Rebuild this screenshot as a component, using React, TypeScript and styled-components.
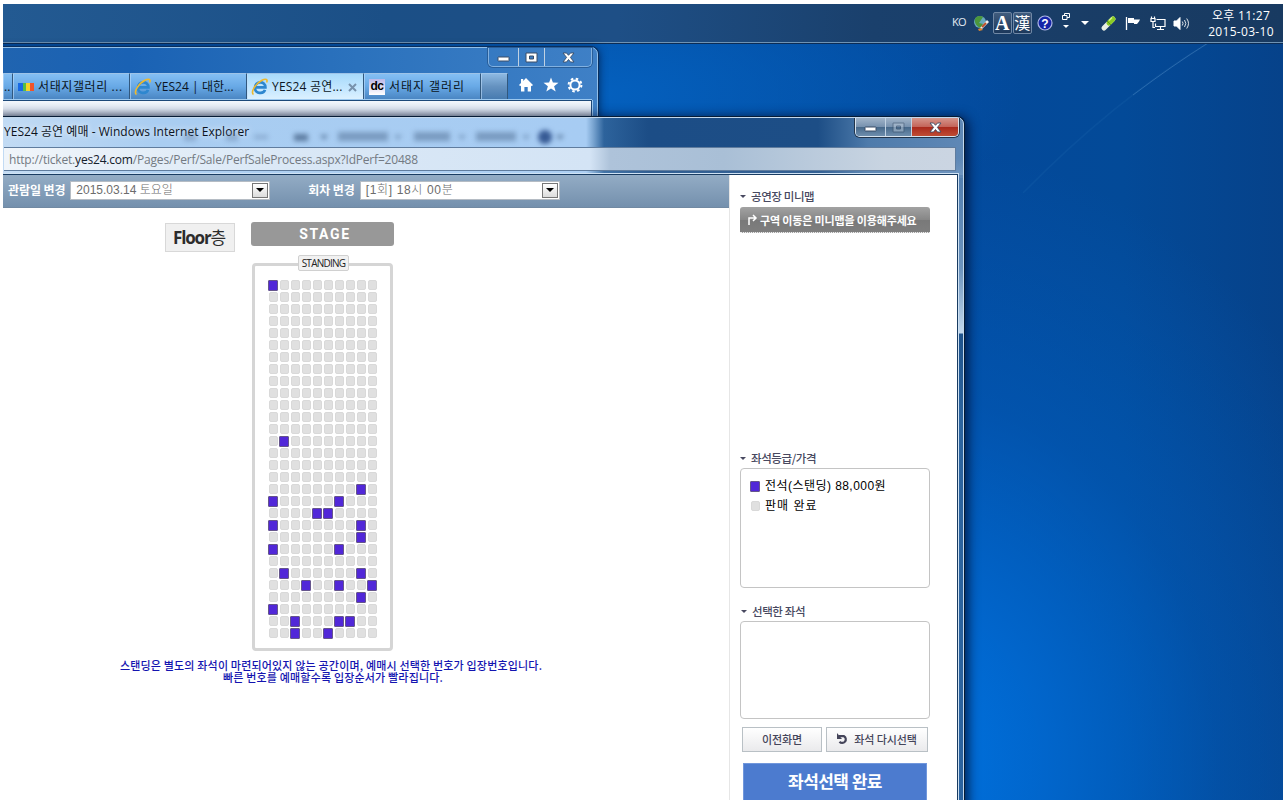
import * as React from "react";
import styled, { createGlobalStyle } from "styled-components";

const ui = `"Open Sans", "Noto Sans CJK KR", sans-serif`;
const kr = `"Noto Sans CJK KR", sans-serif`;
const gulim = `"Liberation Sans", "Noto Sans CJK KR", sans-serif`;

const GlobalStyle = createGlobalStyle`
    * {
        box-sizing: border-box;
    }

    body {
        margin: 0;
        background: #fff;
        overflow: hidden;
        font-family: ${ui};
        font-size: 12px;
    }
`;

const Screen = styled.div`
    height: 800px;
    padding: 4px 0 0 3px;
    overflow: hidden;
`;

const Desktop = styled.div`
    position: relative;
    height: 796px;
    overflow: hidden;
    background:
        radial-gradient(ellipse 520px 620px at 900px 760px, #0074e2 0, rgba(0, 108, 215, 0.85) 25%, rgba(0, 98, 200, 0.4) 60%, transparent 100%),
        radial-gradient(ellipse 420px 170px at 600px 90px, #0460be, transparent 100%),
        linear-gradient(90deg, #0450a4 0, #03499b 960px, #034a98 1120px, #06428a 1280px);
`;

const LightRay = styled.svg`
    position: absolute;
    right: 0;
    top: 39px;
`;

const Taskbar = styled.div`
    position: relative;
    display: flex;
    justify-content: flex-end;
    align-items: center;
    height: 39px;
    padding-right: 2px;
    color: #fff;
    background: linear-gradient(90deg, #235a92 0, #1b4f86 30%, #1e4f86 48%, #1a406c 68%, #183a61 100%);
    border-bottom: 1px solid #6f93b4;
    box-shadow: 0 1px 0 #0b2c55;
`;

const Tray = styled.div`
    display: flex;
    align-items: center;
    height: 38px;

    svg {
        display: block;
    }
`;

const TrayItem = styled.div<{ w: number }>`
    display: flex;
    justify-content: center;
    align-items: center;
    flex: none;
    width: ${(p) => p.w}px;
`;

const Lang = styled.span`
    font-size: 11px;
    letter-spacing: -0.6px;
    color: #e3ebf3;
    margin-top: -3px;
`;

const ImeKey = styled.div`
    width: 19px;
    height: 22px;
    border: 1px solid #7088a5;
    border-radius: 2px;
    background: linear-gradient(#405c7e, #1c385b);
    font: bold 20px/20px "Liberation Serif", serif;
    text-align: center;
    text-indent: -0.5px;

    &.hanja {
        font: 16px/19px "Noto Sans CJK KR", sans-serif;
        margin-left: 1px;
    }
`;

const Clock = styled.div`
    width: 80px;
    margin-left: 9px;
    padding-top: 2px;
    text-align: center;
    font-size: 12px;
    line-height: 16px;
    letter-spacing: 0.3px;
`;

const BackWindow = styled.div`
    position: absolute;
    left: -6px;
    top: 43px;
    width: 601px;
    height: 760px;
    padding-left: 5px;
    border: 1px solid #92bfe8;
    border-radius: 0 7px 0 0;
    background: linear-gradient(90deg, #2064b0 0, #1a62b4 22%, #2b72bd 60%, #3f80c6 100%);
    box-shadow: 0 0 0 1px #0a2f5e, 1px 1px 8px rgba(0, 15, 50, 0.7);
`;

const Controls = styled.div<{ $red?: boolean }>`
    display: flex;
    width: 104px;
    height: 19px;
    overflow: hidden;
    border: 1px solid ${(p) => (p.$red ? "#d7e3ee" : "#82b1e0")};
    border-top: 0;
    border-radius: 0 0 5px 5px;
    box-shadow: 0 0 0 1px ${(p) => (p.$red ? "#22344a" : "#285d98")};
`;

const Control = styled.div<{ w: number; $tone?: "glass" | "red" }>`
    width: ${(p) => p.w}px;
    display: flex;
    justify-content: center;
    align-items: center;
    background: ${(p) =>
        p.$tone === "red"
            ? "linear-gradient(#d5968c 0, #c4655a 48%, #a9281c 50%, #bf4c33 100%)"
            : p.$tone === "glass"
            ? "linear-gradient(#a0b4c9 0, #7892af 48%, #456789 50%, #6e8ead 100%)"
            : "transparent"};

    & + & {
        border-left: 1px solid ${(p) => (p.$tone ? "#c0d1e2" : "#82b1e0")};
    }
`;

const BackTitle = styled.div`
    display: flex;
    justify-content: flex-end;
    height: 25px;
    padding-right: 5px;
`;

const TabStrip = styled.div`
    display: flex;
    height: 27px;
`;

const Tab = styled.div<{ w: number; $active?: boolean }>`
    display: flex;
    align-items: center;
    flex: none;
    width: ${(p) => p.w}px;
    height: 26px;
    padding: 1px 0 0 4px;
    overflow: hidden;
    white-space: nowrap;
    color: #0b1523;
    border-top: 1px solid #9dc3e8;
    border-right: 1px solid #31587e;
    box-shadow: inset 1px 0 0 rgba(190, 220, 250, 0.6);
    background: ${(p) =>
        p.$active ? "linear-gradient(#a7dafb, #c4e7ff 60%, #dcf1ff)" : "linear-gradient(#84bff4, #68a9e6 50%, #4a86c3)"};

    &.new-tab {
        background: linear-gradient(#8db9e2, #6592c0 50%, #477bb0);
    }

    svg {
        flex: none;
    }
`;

const TabLabel = styled.span<{ $gap?: number; $track?: number }>`
    margin-left: ${(p) => p.$gap ?? 4}px;
    font-size: 12px;
    line-height: 20px;
    letter-spacing: ${(p) => p.$track ?? 0}px;
`;

const DcIcon = styled.span`
    width: 16px;
    height: 16px;
    margin-left: 1px;
    background: linear-gradient(#bcb8e8, #fff);
    font: bold 12px/15px "Liberation Sans", sans-serif;
    text-align: center;
    letter-spacing: -0.5px;
    color: #000;
`;

const TabTools = styled.div`
    display: flex;
    align-items: center;
    gap: 8.5px;
    padding: 0 0 4px 10px;
`;

const BackToolbar = styled.div`
    height: 100px;
    margin-right: 5px;
    border: 1px solid #1d4878;
    border-left: 0;
    box-shadow: 0 -1px 0 #9bc8ef, 1px 0 0 #9bc8ef;
    background: linear-gradient(#f3f7fc, #dfe7f2 8px, #aeb9c8 16px);
`;

const FrontWindow = styled.div`
    position: absolute;
    left: -6px;
    top: 113px;
    width: 967px;
    height: 760px;
    padding-left: 6px;
    border: 1px solid #c3d8ec;
    border-radius: 0 7px 0 0;
    background:
        linear-gradient(180deg, transparent 0 60px, rgba(80, 125, 175, 0.7) 60px, #6c93bd 150px, #c3d8ec 215px, #1f538c 216px, #2c649f 300px, #2a629f 100%) right / 5px 100% no-repeat,
        linear-gradient(#0000 40px, rgba(215, 230, 245, 0.15)) 0 0 / 100% 57px no-repeat,
        linear-gradient(90deg, #c2dbf4 0, #a9cdf1 160px, #a7ccf3 588px, #7ba6d2 595px, #2d639c 606px, #1c4d86 650px, #1d4e86 820px, #4e7bab 870px, #5f88b6 967px);
    box-shadow: 0 0 0 1px #061c36, 2px 2px 12px 2px rgba(0, 10, 40, 0.8);
`;

const Caption = styled.div`
    position: relative;
    display: flex;
    justify-content: space-between;
    height: 29px;
    padding-right: 4px;
    overflow: hidden;
`;

const CaptionText = styled.div`
    font-size: 12px;
    line-height: 27px;
    letter-spacing: 0.04px;
    color: #0c131d;
    text-shadow: 0 0 6px #fff;
`;

// menu of the window behind, seen through the glass
const Ghost = styled.svg`
    position: absolute;
    left: 170px;
    top: 5px;
    filter: blur(2.5px);
`;

const AddressBar = styled.div`
    height: 24px;
    margin-right: 7px;
    padding-left: 5px;
    border: 1px solid #5f7c9e;
    border-left: 0;
    background: linear-gradient(90deg, #f0f5fa 0, #dae8f6 280px, #d4e4f5 586px, #aec3da 606px, #a9bfd6 720px, #c8d4e1 880px, #cbd5e2 100%);
    font-size: 12px;
    line-height: 24px;
    letter-spacing: -0.19px;
    color: #737a82;

    b {
        font-weight: 400;
        color: #14202c;
    }
`;

const Page = styled.div`
    display: flex;
    width: 955px;
    height: 700px;
    margin-top: 3px;
    margin-left: -1px;
    border-top: 1px solid #193c62;
    border-right: 1px solid #193c62;
    box-shadow: 1px -1px 0 #cfe2f4;
    background: #fff;
`;

const Main = styled.div`
    width: 727px;
    border-right: 1px solid #e6e6e6;
`;

const Filters = styled.div`
    display: flex;
    align-items: center;
    height: 33px;
    padding: 0 0 2px 5px;
    background: linear-gradient(#93acc5, #7490ad);
    border-bottom: 1px solid #7189a2;
`;

const FilterLabel = styled.span<{ $ml?: number }>`
    flex: none;
    margin-left: ${(p) => p.$ml ?? 0}px;
    font: bold 12px/18px ${kr};
    letter-spacing: -0.1px;
    color: #fff;
`;

const Select = styled.div<{ $ml: number; $track?: number }>`
    display: flex;
    justify-content: space-between;
    width: 200px;
    height: 19px;
    margin-left: ${(p) => p.$ml}px;
    padding: 1px 1px 1px 5px;
    border: 1px solid #b5bcc4;
    background: #fff;
    font: 300 12px/15px ${gulim};
    letter-spacing: ${(p) => p.$track ?? 0}px;
    color: #6c6c6c;
    white-space: pre;
`;

const Drop = styled.div`
    display: flex;
    align-items: center;
    justify-content: center;
    width: 16px;
    height: 15px;
    border: 1px solid #777;
    background: linear-gradient(#fff, #dcdcdc);
`;

const Hall = styled.div`
    display: flex;
    align-items: flex-start;
    padding: 14px 0 0 162px;
`;

const Floor = styled.div`
    width: 70px;
    height: 29px;
    border: 1px solid #d8d8d8;
    background: #f0f0f0;
    margin-top: 1px;
    padding-left: 7px;
    font: 17px/27px ${ui};
    letter-spacing: -1px;
    color: #2c2c2c;
    white-space: nowrap;

    b {
        letter-spacing: -1.15px;
    }
`;

const Arena = styled.div`
    width: 143px;
    margin-left: 16px;
    display: flex;
    flex-direction: column;
    align-items: center;
`;

const Stage = styled.div`
    width: 143px;
    height: 24px;
    border-radius: 3px;
    background: #989898;
    font: bold 14px/25px Roboto, sans-serif;
    letter-spacing: 1.6px;
    padding-left: 5px;
    text-align: center;
    color: #fff;
`;

const StandingTag = styled.div`
    position: relative;
    z-index: 1;
    width: 51px;
    height: 16px;
    margin: 9px 0 -8px 2px;
    border: 1px solid #d0d0d0;
    border-radius: 2px;
    background: #f1f1f1;
    font: 10px/14px ${ui};
    letter-spacing: -0.75px;
    text-align: center;
    color: #222;
`;

const Block = styled.div`
    width: 141px;
    height: 388px;
    padding: 14px 0 0 13px;
    border: 3px solid #d5d5d5;
    border-radius: 4px;
`;

const SeatGrid = styled.div`
    display: grid;
    grid-template-columns: repeat(10, 11px);
    grid-auto-rows: 12px;
`;

const Seat = styled.div<{ $open: boolean }>`
    width: ${(p) => (p.$open ? 10 : 9)}px;
    height: ${(p) => (p.$open ? 11 : 10)}px;
    margin-left: ${(p) => (p.$open ? 0 : 1)}px;
    border: 1px solid ${(p) => (p.$open ? "#65558c" : "#d9d9d9")};
    border-radius: ${(p) => (p.$open ? 1 : 2)}px;
    background: ${(p) => (p.$open ? "#5127d8" : "#e0e0e0")};
`;

const Notice = styled.div`
    margin-top: 8px;
    width: 656px;
    font: 500 11px/12px ${kr};
    letter-spacing: 0.18px;
    text-align: center;
    color: #1414b0;
    white-space: nowrap;

    div + div {
        padding-left: 4px;
    }
`;

const Side = styled.div`
    padding: 12px 0 0 10px;
    width: 227px;
`;

const Heading = styled.h3<{ $mt?: number; $ml?: number }>`
    display: flex;
    align-items: center;
    gap: 5px;
    margin: ${(p) => p.$mt ?? 0}px 0 0 ${(p) => p.$ml ?? 0}px;
    height: 18px;
    font: 500 11.5px/18px ${kr};
    letter-spacing: -0.4px;
    color: #484960;
`;

const MapHint = styled.div`
    display: flex;
    align-items: center;
    width: 190px;
    height: 26px;
    margin-top: 2px;
    padding-left: 7px;
    gap: 2px;
    border-radius: 3px 3px 0 0;
    border-bottom: 1px dotted #eee;
    background: linear-gradient(#a2a2a2, #878787 50%, #797979 51%, #7e7e7e);
    font: bold 11px/24px ${kr};
    letter-spacing: -0.15px;
    color: #fff;
    white-space: nowrap;
`;

const Panel = styled.div<{ h: number }>`
    width: 190px;
    height: ${(p) => p.h}px;
    margin-top: 1px;
    padding: 7px 9px;
    border: 1px solid #c4c4c4;
    border-radius: 4px;
`;

const Legend = styled.div<{ $track: number }>`
    display: flex;
    align-items: center;
    gap: 5px;
    height: 20px;
    font: 12px/20px ${gulim};
    letter-spacing: ${(p) => p.$track}px;
    color: #000;
    white-space: pre;
`;

const Buttons = styled.div`
    display: flex;
    gap: 4px;
    margin: 8px 0 11px 2px;
`;

const Button = styled.button<{ w: number }>`
    display: flex;
    align-items: center;
    justify-content: center;
    gap: 5px;
    width: ${(p) => p.w}px;
    height: 25px;
    padding: 0 0 1px;
    border: 1px solid #b9c0c5;
    background: linear-gradient(#fff, #eaeaec);
    font: 500 11px/22px ${kr};
    letter-spacing: -0.1px;
    color: #45455a;
    white-space: nowrap;
`;

const Submit = styled.button`
    display: block;
    width: 184px;
    height: 40px;
    margin-left: 3px;
    padding: 0 0 4px;
    border: 1px solid #7197dc;
    background: #4c7bcf;
    font: bold 17px/34px ${kr};
    letter-spacing: -0.55px;
    color: #fff;
`;

const openSeats: Record<number, number[]> = {
    0: [0],
    13: [1],
    17: [8],
    18: [0, 6],
    19: [4, 5],
    20: [0, 8],
    21: [8],
    22: [0, 6],
    24: [1, 8],
    25: [3, 6, 9],
    26: [8],
    27: [0],
    28: [2, 6, 7],
    29: [2, 5],
};

const Arrow = ({ fill = "#000", w = 8 }) => (
    <svg width={w} height={w / 2} viewBox="0 0 8 4">
        <path d="M0 0h8L4 4z" fill={fill} />
    </svg>
);

const IeIcon = () => (
    <svg width="18" height="18" viewBox="0 0 18 18" fill="none">
        <path d="M4.2 9.4h10.2c0-7.2-10.4-6.6-10.4.5 0 6 8.4 6.600 10 2" stroke="#2e87cf" strokeWidth="2.700" />
        <path d="M2.500 16.500C-1 14.500 5 5 11 2.200c4-1.900 6-.6 4.600 2.300" stroke="#eeb92e" strokeWidth="1.600" />
    </svg>
);

const MinIcon = () => (
    <svg width="13" height="6" viewBox="0 0 13 6" style={{ marginTop: 4 }}>
        <rect x="1" y="1" width="11" height="4" rx=".5" fill="#fff" stroke="#3a4d66" />
    </svg>
);

const MaxIcon = ({ dim = false }) => (
    <svg width="13" height="11" viewBox="0 0 13 11" opacity={dim ? 0.5 : 1}>
        <path d="M1 1h11v9H1zM4.500 4v3h4V4z" fill={dim ? "#bccbdb" : "#fff"} fillRule="evenodd" stroke="#3a4d66" />
    </svg>
);

const CloseIcon = () => (
    <svg width="13" height="11" viewBox="0 0 13 11">
        <path d="M1 1h3.500l2 2.300L8.500 1H12L8.400 5.400 12 10H8.500l-2-2.500-2 2.500H1l3.600-4.600z" fill="#fff" stroke="#3a4d66" strokeWidth=".9" />
    </svg>
);

const WindowControls = ({ front = false }) => (
    <Controls $red={front}>
        <Control w={29} $tone={front ? "glass" : undefined}>
            <MinIcon />
        </Control>
        <Control w={27} $tone={front ? "glass" : undefined}>
            <MaxIcon dim={front} />
        </Control>
        <Control w={47} $tone={front ? "red" : undefined}>
            <CloseIcon />
        </Control>
    </Controls>
);

const TrayIcons = () => (
    <Tray>
        <TrayItem w={18}>
            <Lang>KO</Lang>
        </TrayItem>
        <TrayItem w={25}>
            <svg width="17" height="17" viewBox="0 0 17 17">
                <circle cx="8" cy="7" r="6" fill="#67a9bd" />
                <path d="M3 4c2-4 6-3 8-2L9 5 7 8l4 1-2 4C5 12 2 8 3 4z" fill="#4b963c" />
                <path d="M8 13l7-8 2 2-7 7z" fill="#eee" />
                <path d="M6 14l3-1 2 2-4 1z" fill="#dd8731" />
                <path d="M10 12l4-4" stroke="#bb4e29" strokeWidth="2" />
            </svg>
        </TrayItem>
        <ImeKey>A</ImeKey>
        <ImeKey className="hanja">漢</ImeKey>
        <TrayItem w={25}>
            <svg width="16" height="16" viewBox="0 0 16 16">
                <circle cx="8" cy="8" r="7" fill="#1525a8" stroke="#aeb6e6" strokeWidth="1.200" />
                <text x="8" y="12.500" textAnchor="middle" fontFamily="Liberation Sans" fontWeight="bold" fontSize="12" fill="#fff">?</text>
            </svg>
        </TrayItem>
        <TrayItem w={17}>
            <svg width="10" height="20" viewBox="0 0 10 20" fill="none" stroke="#fff">
                <path d="M3.500 3V.500h5v4H6" />
                <path d="M1.500 2.500H6v4H1.500z" />
                <path d="M2 12h6l-3 3z" fill="#fff" stroke="none" />
            </svg>
        </TrayItem>
        <TrayItem w={21}>
            <Arrow fill="#fff" />
        </TrayItem>
        <TrayItem w={26}>
            <svg width="17" height="17" viewBox="0 0 17 17">
                <path d="M4 13l9-9" stroke="#e9efe3" strokeWidth="5" strokeLinecap="round" />
                <path d="M9 8l4-4" stroke="#8acb25" strokeWidth="5" strokeLinecap="round" />
                <path d="M7 6l4 4" stroke="#5a971c" />
                <path d="M9 5.500l3-3" stroke="#d8f78d" strokeWidth="1.500" />
            </svg>
        </TrayItem>
        <TrayItem w={24}>
            <svg width="16" height="15" viewBox="0 0 16 15">
                <path d="M1.500 1v13" stroke="#fff" strokeWidth="1.300" />
                <path d="M3 2h6v1.500h6l-1 2-2 2.500H9V7H3z" fill="#fff" />
            </svg>
        </TrayItem>
        <TrayItem w={25}>
            <svg width="16" height="15" viewBox="0 0 16 15" fill="none" stroke="#fff" strokeWidth="1.200">
                <path d="M6.500 3.500H15v7H5.500V7.500M10.500 11v2.500M7 13.500h7M1.500 .5v2M4.500 .5v2M1 2.500h4v3H1zM3 6v5.500h2" />
            </svg>
        </TrayItem>
        <TrayItem w={22}>
            <svg width="17" height="15" viewBox="0 0 17 15" fill="none" stroke="#fff">
                <path d="M1 5h2.500L7 1.500v12L3.500 10H1z" fill="#fff" />
                <path d="M9.300 5.500q1.500 2 0 4M11.500 4q2.600 3.500 0 7M13.700 2.500q3.600 5 0 10" opacity=".85" />
            </svg>
        </TrayItem>
    </Tray>
);

const SeatMap = () => (
    <SeatGrid>
        {Array.from({ length: 300 }, (_, i) => {
            const row = Math.floor(i / 10);
            return <Seat key={i} $open={(openSeats[row] || []).includes(i % 10)} />;
        })}
    </SeatGrid>
);

const Browser = () => (
    <BackWindow>
        <BackTitle>
            <WindowControls />
        </BackTitle>
        <TabStrip>
            <Tab w={10}>
                <TabLabel $gap={-3}>..</TabLabel>
            </Tab>
            <Tab w={117}>
                <svg width="18" height="16" viewBox="0 0 18 16">
                    <path d="M1 4h5v8H1z" fill="#1769e5" />
                    <path d="M6 4h4v8H6z" fill="#51bd4b" />
                    <path d="M9 4h4v8H9z" fill="#f5d327" />
                    <path d="M13 4h4v8h-4z" fill="#f0542a" />
                </svg>
                <TabLabel $gap={3} $track={0.6}>서태지갤러리 ...</TabLabel>
            </Tab>
            <Tab w={117}>
                <IeIcon />
                <TabLabel $gap={3} $track={0.05}>YES24 | 대한...</TabLabel>
            </Tab>
            <Tab w={117} $active>
                <IeIcon />
                <TabLabel $gap={3} $track={0.2}>YES24 공연...</TabLabel>
                <svg width="9" height="9" viewBox="0 0 9 9" style={{ marginLeft: 5 }}>
                    <path d="M1 1l7 7M8 1L1 8" stroke="#7892ac" strokeWidth="2" />
                </svg>
            </Tab>
            <Tab w={117}>
                <DcIcon>dc</DcIcon>
                <TabLabel $track={0.95}>서태지 갤러리</TabLabel>
            </Tab>
            <Tab w={27} className="new-tab" />
            <TabTools>
                <svg width="16" height="16" viewBox="0 0 16 16" fill="#fff">
                    <path d="M8 1l7 7-1.300 1.200L13 8.500V14.500H9.700V10H6.400v4.500H3V8.500l-.7.7L1 8l2-2V2h2.200v2z" />
                </svg>
                <svg width="16" height="16" viewBox="0 0 16 16" fill="#fff">
                    <path d="M8 .5l1.900 5.100 5.600.2-4.400 3.400 1.600 5.400L8 11.500l-4.700 3.100 1.600-5.400L.5 5.800l5.600-.2z" />
                </svg>
                <svg width="16" height="16" viewBox="0 0 16 16" fill="none" stroke="#fff">
                    <circle cx="8" cy="8" r="4.600" strokeWidth="2" />
                    <circle cx="8" cy="8" r="6.400" strokeWidth="2" strokeDasharray="2.500 2.527" />
                </svg>
            </TabTools>
        </TabStrip>
        <BackToolbar />
    </BackWindow>
);

const TicketPage = () => (
    <Page>
        <Main>
            <Filters>
                <FilterLabel>관람일 변경</FilterLabel>
                <Select $ml={5}>
                    2015.03.14 토요일
                    <Drop>
                        <Arrow />
                    </Drop>
                </Select>
                <FilterLabel $ml={38}>회차 변경</FilterLabel>
                <Select $ml={5} $track={0.65}>
                    [1회] 18시 00분
                    <Drop>
                        <Arrow />
                    </Drop>
                </Select>
            </Filters>
            <Hall>
                <Floor>
                    <b>Floor</b>층
                </Floor>
                <Arena>
                    <Stage>STAGE</Stage>
                    <StandingTag>STANDING</StandingTag>
                    <Block>
                        <SeatMap />
                    </Block>
                </Arena>
            </Hall>
            <Notice>
                <div>스탠딩은 별도의 좌석이 마련되어있지 않는 공간이며, 예매시 선택한 번호가 입장번호입니다.</div>
                <div>빠른 번호를 예매할수록 입장순서가 빨라집니다.</div>
            </Notice>
        </Main>
        <Side>
            <Heading>
                <Arrow fill="#484960" w={6} />
                공연장 미니맵
            </Heading>
            <MapHint>
                <svg width="11" height="12" viewBox="0 0 11 12" fill="none" stroke="#fff" strokeWidth="1.500">
                    <path d="M2 11V4h6M6 1l3 3-3 3" />
                </svg>
                구역 이동은 미니맵을 이용해주세요
            </MapHint>
            <Heading $mt={216}>
                <Arrow fill="#484960" w={6} />
                좌석등급/가격
            </Heading>
            <Panel h={120}>
                <Legend $track={0.45}>
                    <Seat $open />
                    전석(스탠딩) 88,000원
                </Legend>
                <Legend $track={1}>
                    <Seat $open={false} />
                    판매 완료
                </Legend>
            </Panel>
            <Heading $mt={14} $ml={1}>
                <Arrow fill="#484960" w={6} />
                선택한 좌석
            </Heading>
            <Panel h={98} />
            <Buttons>
                <Button w={80}>이전화면</Button>
                <Button w={102}>
                    <svg width="12" height="12" viewBox="0 0 12 12" fill="none" stroke="#45455a" strokeWidth="2.200">
                        <path d="M2 3.200h5a3.600 3.600 0 1 1-4.500 5.500" />
                        <path d="M0 0v6h5z" fill="#45455a" stroke="none" />
                    </svg>
                    좌석 다시선택
                </Button>
            </Buttons>
            <Submit>좌석선택 완료</Submit>
        </Side>
    </Page>
);

const TicketWindow = () => (
    <FrontWindow>
        <Caption>
            <Ghost width="420" height="24" viewBox="0 0 420 24" fill="#5c7ba0">
                <path d="M10 10h12v8H10zM52 10h12v8H52zM80 12h14v4H80z" opacity=".4" />
                <path d="M120 11h14v7h-14zM146 12h8l-4 5z" />
                <path d="M164 9h50v9h-50zM220 12h8l-4 5zM240 9h36v9h-36zM284 12h8l-4 5zM302 9h40v9h-40zM348 12h8l-4 5z" opacity=".6" />
                <circle cx="371" cy="14" r="7" fill="#375a94" />
                <path d="M382 12h8l-4 5z" />
            </Ghost>
            <CaptionText>YES24 공연 예매 - Windows Internet Explorer</CaptionText>
            <WindowControls front />
        </Caption>
        <AddressBar>
            http://ticket.<b>yes24.com</b>/Pages/Perf/Sale/PerfSaleProcess.aspx?IdPerf=20488
        </AddressBar>
        <TicketPage />
    </FrontWindow>
);

export default function App() {
    return (
        <Screen>
            <GlobalStyle />
            <Desktop>
                <LightRay width="300" height="260" viewBox="0 0 300 260" fill="none">
                    <path d="M225 0Q130 58 40 150" stroke="#5aa0dc" strokeWidth="1.500" opacity=".08" />
                    <path d="M225 0Q190 22 150 52" stroke="#9ccaf0" opacity=".22" />
                </LightRay>
                <Taskbar>
                    <TrayIcons />
                    <Clock>
                        오후 11:27
                        <br />
                        2015-03-10
                    </Clock>
                </Taskbar>
                <Browser />
                <TicketWindow />
            </Desktop>
        </Screen>
    );
}
